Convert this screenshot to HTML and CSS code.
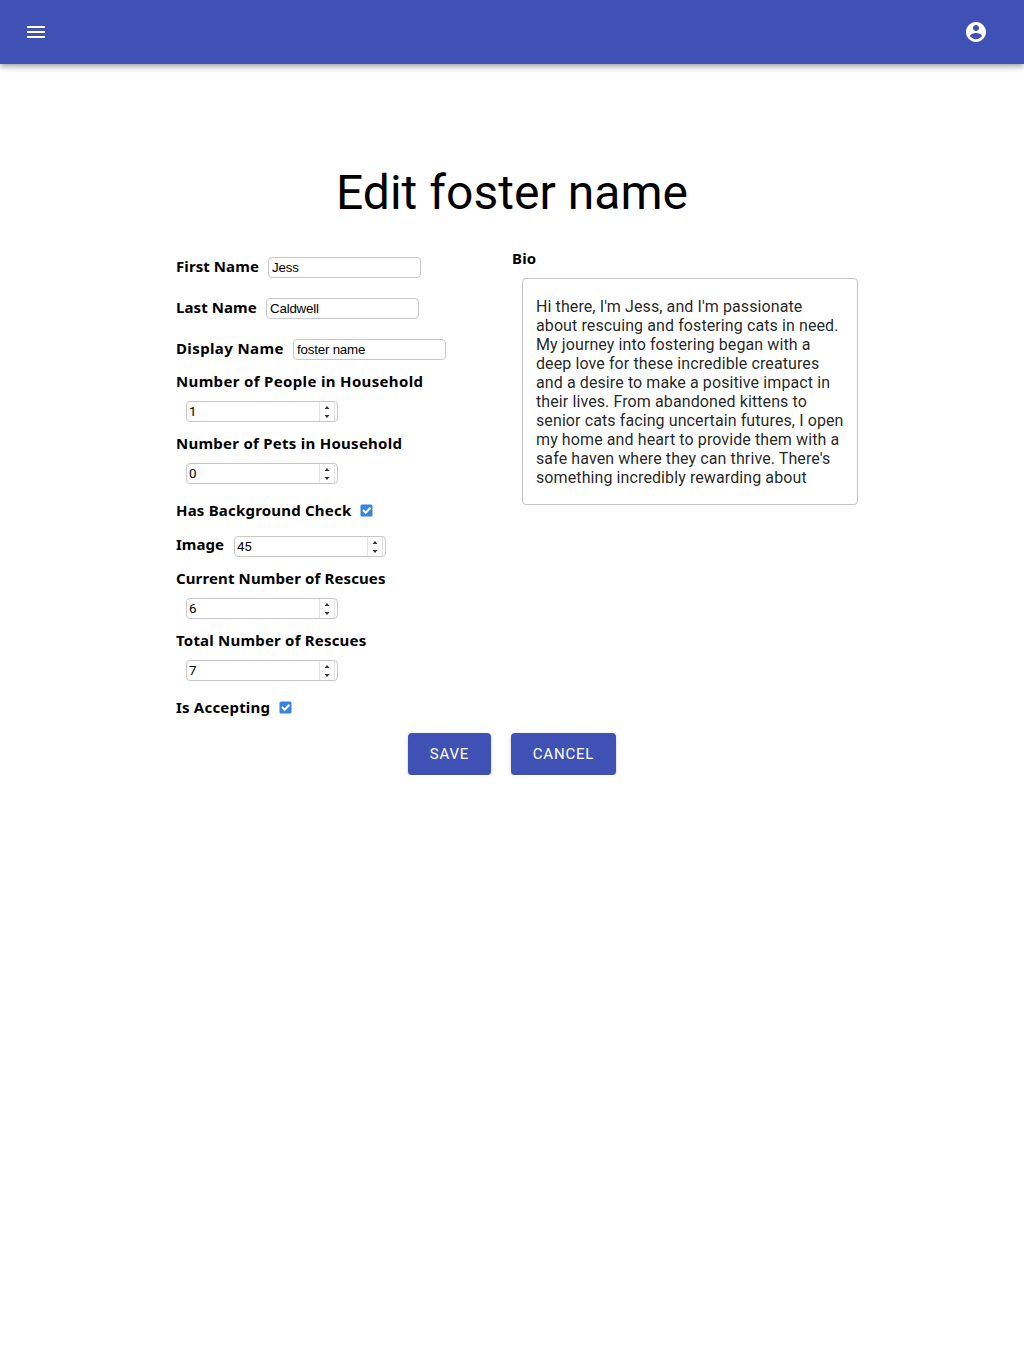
FILE: index.html
```html
<!DOCTYPE html>
<html lang="en">
<head>
<meta charset="utf-8">
<title>Edit foster name</title>
<link rel="stylesheet" href="styles.css">
</head>
<body>
<header class="bar">
  <svg width="24" height="24" viewBox="0 0 24 24"><path d="M3 18h18v-2H3v2zm0-5h18v-2H3v2zm0-7v2h18V6H3z"/></svg>
  <svg width="24" height="24" viewBox="0 0 24 24"><path d="M12 2C6.480 2 2 6.480 2 12s4.480 10 10 10 10-4.480 10-10S17.520 2 12 2zm0 3c1.660 0 3 1.340 3 3s-1.340 3-3 3-3-1.340-3-3 1.340-3 3-3zm0 14.200c-2.500 0-4.710-1.280-6-3.220.030-1.990 4-3.080 6-3.080 1.990 0 5.970 1.090 6 3.080-1.290 1.940-3.500 3.220-6 3.220z"/></svg>
</header>
<main>
  <h1>Edit foster name</h1>
  <div class="columns">
    <div class="fields">
      <div class="row"><label class="label first">First Name</label><div class="input">Jess</div></div>
      <div class="row"><label class="label last">Last Name</label><div class="input">Caldwell</div></div>
      <div class="row"><label class="label display">Display Name</label><div class="input">foster name</div></div>
      <div class="stack"><label class="label people">Number of People in Household</label><div class="input number">1<svg class="spin" width="17" height="19" viewBox="0 0 17 19"><path class="frame" d="M.5 0v19M15.500 0v19"/><path d="M5.500 7 8 4l2.500 3zM5.500 13h5L8 16z"/></svg></div></div>
      <div class="stack"><label class="label pets">Number of Pets in Household</label><div class="input number">0<svg class="spin" width="17" height="19" viewBox="0 0 17 19"><path class="frame" d="M.5 0v19M15.500 0v19"/><path d="M5.500 7 8 4l2.500 3zM5.500 13h5L8 16z"/></svg></div></div>
      <div class="row check"><label class="label">Has Background Check</label><svg width="13" height="13" viewBox="0 0 13 13"><rect class="box" width="12" height="12" x=".5" y=".5" rx="1.500"/><path class="tick" d="m3 6 2.700 2.800 4.800-5"/></svg></div>
      <div class="row image"><label class="label picture">Image</label><div class="input number">45<svg class="spin" width="17" height="19" viewBox="0 0 17 19"><path class="frame" d="M.5 0v19M15.500 0v19"/><path d="M5.500 7 8 4l2.500 3zM5.500 13h5L8 16z"/></svg></div></div>
      <div class="stack"><label class="label current">Current Number of Rescues</label><div class="input number">6<svg class="spin" width="17" height="19" viewBox="0 0 17 19"><path class="frame" d="M.5 0v19M15.500 0v19"/><path d="M5.500 7 8 4l2.500 3zM5.500 13h5L8 16z"/></svg></div></div>
      <div class="stack"><label class="label">Total Number of Rescues</label><div class="input number">7<svg class="spin" width="17" height="19" viewBox="0 0 17 19"><path class="frame" d="M.5 0v19M15.500 0v19"/><path d="M5.500 7 8 4l2.500 3zM5.500 13h5L8 16z"/></svg></div></div>
      <div class="row check"><label class="label">Is Accepting</label><svg width="13" height="13" viewBox="0 0 13 13"><rect class="box" width="12" height="12" x=".5" y=".5" rx="1.500"/><path class="tick" d="m3 6 2.700 2.800 4.800-5"/></svg></div>
    </div>
    <div class="bio">
      <label class="label">Bio</label>
      <div class="bio-text">Hi there, I'm Jess, and I'm passionate<br>about rescuing and fostering cats in need.<br>My journey into fostering began with a<br>deep love for these incredible creatures<br>and a desire to make a positive impact in<br>their lives. From abandoned kittens to<br>senior cats facing uncertain futures, I open<br>my home and heart to provide them with a<br>safe haven where they can thrive. There's<br>something incredibly rewarding about</div>
    </div>
  </div>
  <div class="actions"><button class="save">SAVE</button><button class="cancel">CANCEL</button></div>
</main>
</body>
</html>
```
FILE: styles.css
```css
* { box-sizing: border-box; }
body { margin: 0; background: #fff; color: #000; font-family: Roboto, sans-serif; }
.bar {
  height: 64px; padding: 0 36px 0 24px; background: #3f51b5;
  display: flex; align-items: center; justify-content: space-between;
  box-shadow: 0 2px 4px -1px rgba(0,0,0,.2), 0 4px 5px rgba(0,0,0,.14), 0 1px 10px rgba(0,0,0,.12);
}
.bar svg { fill: #fff; }
main { width: 672px; margin: 0 auto; padding-top: 101px; }
h1 { margin: 0 0 26px; font-size: 48px; line-height: 56px; font-weight: 400; letter-spacing: .04px; text-align: center; white-space: nowrap; }
.columns { display: grid; grid-template-columns: 336px 336px; height: 476px; }
.label { font: 700 15px/22px "Noto Sans", sans-serif; letter-spacing: .2px; white-space: nowrap; }
.first { width: 82px; letter-spacing: .08px; }
.last { width: 80px; letter-spacing: .08px; }
.display { width: 107px; letter-spacing: .38px; }
.people { letter-spacing: .34px; }
.pets { letter-spacing: .26px; }
.picture { width: 48px; letter-spacing: 0; }
.current { letter-spacing: .12px; }
.row { height: 41px; display: flex; align-items: center; gap: 10px; }
.row .label { margin-top: -4px; }
.row.check { height: 31px; gap: 9px; padding-top: 1px; }
.row.check .label { margin-top: 0; }
.row.image { height: 42px; }
.stack { height: 62px; display: flex; flex-direction: column; gap: 9px; }
.stack .input { margin-left: 10px; }
.input {
  width: 153px; height: 21px; flex: none; display: flex; align-items: center; justify-content: space-between;
  padding-left: 3px; border: 1px solid #c8c8c8; border-radius: 4px;
  font: 13.333px "Liberation Sans", sans-serif; letter-spacing: -.2px;
}
.number { width: 152px; padding: 0 1px 0 2px; font-family: Roboto, sans-serif; }
.spin { fill: #2e3436; }
.frame { stroke: #e2e2e2; fill: none; }
.box { fill: #3584e4; }
.tick { fill: none; stroke: #fff; stroke-width: 2; }
.bio { display: flex; flex-direction: column; gap: 9px; }
.bio-text {
  width: 336px; height: 227px; margin-left: 10px; padding: 18px 13px;
  border: 1px solid #c4c4c4; border-radius: 4px; color: rgba(0,0,0,.87);
  font-size: 16px; line-height: 19px; letter-spacing: .1px; white-space: nowrap;
}
.actions { display: flex; justify-content: center; gap: 20px; padding-top: 10px; }
button {
  height: 42px; padding: 0; border: 0; border-radius: 4px; background: #3f51b5; color: #fff;
  font: 400 15px Roboto, sans-serif; letter-spacing: .8px;
  box-shadow: 0 3px 1px -2px rgba(0,0,0,.2), 0 2px 2px rgba(0,0,0,.14), 0 1px 5px rgba(0,0,0,.12);
}
.save { width: 83px; }
.cancel { width: 105px; }
```
